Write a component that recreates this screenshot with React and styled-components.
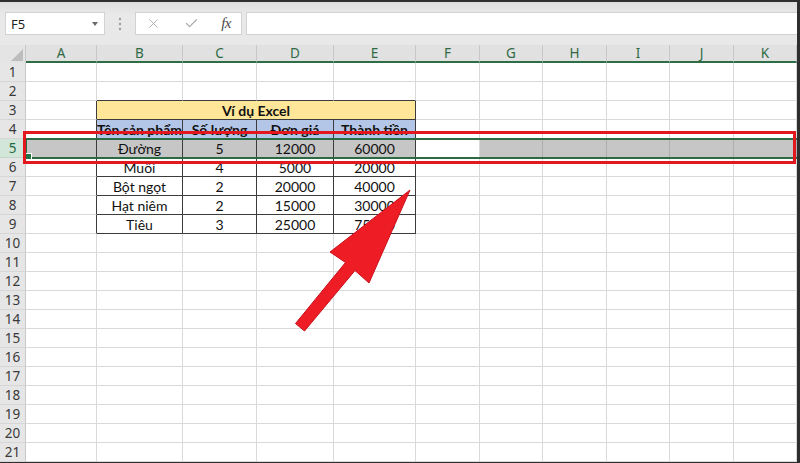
import React from "react";
import styled, { createGlobalStyle } from "styled-components";
import { X, Check } from "lucide-react";

const GlobalStyle = createGlobalStyle`
  html, body {
    margin: 0;
    padding: 0;
    background: #ffffff;
  }
  * {
    box-sizing: border-box;
  }
`;

const COLS = ["A", "B", "C", "D", "E", "F", "G", "H", "I", "J", "K"];
const WIDTHS = [71, 86, 74, 77, 82, 64, 63, 64, 63, 64, 63];

const TABLE = {
  4: ["Tên sản phẩm", "Số lượng", "Đơn giá", "Thành tiền"],
  5: ["Đường", "5", "12000", "60000"],
  6: ["Muối", "4", "5000", "20000"],
  7: ["Bột ngọt", "2", "20000", "40000"],
  8: ["Hạt niêm", "2", "15000", "30000"],
  9: ["Tiêu", "3", "25000", "75000"],
};

const SELECTED_ROW = 5;
const ACTIVE_COL = 5;

const Frame = styled.div`
  position: relative;
  width: 800px;
  height: 463px;
  overflow: hidden;
  border-top: 2px solid #2e2e2e;
  border-right: 3px solid #2e2e2e;
  border-bottom: 1px solid #2e2e2e;
  background: #ffffff;
  display: flex;
  flex-direction: column;
`;

const Toolbar = styled.div`
  height: 43px;
  flex: none;
  display: flex;
  align-items: flex-start;
  padding: 10px 0 0 5px;
  background: linear-gradient(#dedede, #e9e9e9 30%, #e8e8e8);
  font-family: "Noto Sans", "Open Sans", sans-serif;
`;

const NameBox = styled.div`
  width: 100px;
  height: 23px;
  background: #ffffff;
  border: 1px solid #d2d2d2;
  display: flex;
  align-items: center;
  justify-content: space-between;
  padding: 0 6px 0 5px;
  font-size: 13px;
  color: #222;
`;

const DropArrow = styled.span`
  width: 0;
  height: 0;
  border-left: 3.5px solid transparent;
  border-right: 3.5px solid transparent;
  border-top: 4px solid #6a6a6a;
`;

const Grip = styled.div`
  width: 30px;
  height: 23px;
  display: flex;
  align-items: center;
  justify-content: center;
`;

const FxGroup = styled.div`
  width: 107px;
  height: 23px;
  background: #ffffff;
  border: 1px solid #d2d2d2;
  display: flex;
  align-items: center;
  justify-content: space-between;
  padding: 0 10px 0 10px;
  color: #a8a8a8;
`;

const FxLabel = styled.span`
  font-family: "Liberation Serif", "DejaVu Serif", serif;
  font-style: italic;
  font-size: 15px;
  color: #4a4a4a;
  letter-spacing: -0.5px;
`;

const FormulaInput = styled.div`
  flex: 1;
  height: 23px;
  margin-left: 4px;
  background: #ffffff;
  border: 1px solid #d2d2d2;
  border-right: none;
`;

const Sheet = styled.div`
  position: relative;
  flex: 1;
  display: grid;
  grid-template-columns: 26px ${WIDTHS.map((w) => `${w}px`).join(" ")};
  grid-template-rows: 18px repeat(21, 19px);
`;

const Corner = styled.div`
  background: #e4e4e4;
  border-right: 1px solid #c9c9c9;
  display: flex;
  align-items: flex-end;
  justify-content: flex-end;
  padding: 0 2px 2px 0;

  &::after {
    content: "";
    width: 0;
    height: 0;
    border-left: 12px solid transparent;
    border-bottom: 12px solid #bdbdbd;
  }
`;

const ColHead = styled.div`
  background: #e1e1e1;
  border-right: 1px solid #c8c8c8;
  border-bottom: 2px solid #2d6e46;
  display: flex;
  align-items: center;
  justify-content: center;
  font-family: "Noto Sans", "Open Sans", sans-serif;
  font-size: 13.5px;
  color: #2f6a45;
`;

const RowHead = styled.div`
  background: ${(p) => (p.$active ? "#d3e6da" : "#e6e6e6")};
  border-right: 1px solid #c9c9c9;
  border-bottom: 1px solid ${(p) => (p.$active ? "#c5d6cb" : "#d6d6d6")};
  display: flex;
  align-items: center;
  justify-content: center;
  font-family: "Noto Sans", "Open Sans", sans-serif;
  font-size: 13.5px;
  color: ${(p) => (p.$active ? "#1f6b3f" : "#3a3a3a")};
`;

const Cell = styled.div`
  grid-column: span ${(p) => p.$span || 1};
  background: ${(p) => p.$bg || "#ffffff"};
  border-right: 1px solid ${(p) => (p.$darkRight ? "#3c3c3c" : p.$sel ? "#aeaeae" : "#d9d9d9")};
  border-bottom: 1px solid ${(p) => (p.$darkBottom ? "#3c3c3c" : "#d9d9d9")};
  display: flex;
  align-items: center;
  justify-content: center;
  overflow: hidden;
  white-space: nowrap;
  font-family: Lato, "Open Sans", sans-serif;
  font-size: 14px;
  font-weight: ${(p) => (p.$bold ? 700 : 400)};
  color: #111;
  padding-top: 1px;
`;

const Selection = styled.div`
  position: absolute;
  left: 26px;
  right: 0;
  top: ${18 + 19 * (SELECTED_ROW - 1) - 1}px;
  height: 21px;
  border-top: 2px solid #2a6b44;
  border-bottom: 2px solid #2a6b44;
  border-left: 1px solid #2a6b44;
  pointer-events: none;

  &::after {
    content: "";
    position: absolute;
    left: -2px;
    bottom: -3px;
    width: 5px;
    height: 5px;
    background: #217346;
    border: 1px solid #ffffff;
  }
`;

const Highlight = styled.div`
  position: absolute;
  left: 23px;
  top: 129px;
  width: 773px;
  height: 33px;
  border: 3px solid #e3171e;
  pointer-events: none;
`;

const ArrowLayer = styled.svg`
  position: absolute;
  left: 0;
  top: -2px;
  pointer-events: none;
`;

function GripIcon() {
  return (
    <svg width="4" height="14" viewBox="0 0 4 14">
      <circle cx="2" cy="2" r="1.2" fill="#9c9c9c" />
      <circle cx="2" cy="7" r="1.2" fill="#9c9c9c" />
      <circle cx="2" cy="12" r="1.2" fill="#9c9c9c" />
    </svg>
  );
}

function tableCell(r, c) {
  const inTable = c >= 1 && c <= 4 && r >= 3 && r <= 9;
  const darkRight = r >= 3 && r <= 9 && c >= 0 && c <= 4;
  const darkBottom = c >= 1 && c <= 4 && r >= 2 && r <= 9;
  const sel = r === SELECTED_ROW && c !== ACTIVE_COL;
  let bg = sel ? "#c6c6c6" : "#ffffff";
  let text = null;
  let bold = false;
  if (inTable && TABLE[r]) {
    text = TABLE[r][c - 1];
    if (r === 4) {
      bg = "#b4c6e7";
      bold = true;
    }
  }
  return { bg, text, bold, darkRight, darkBottom, sel };
}

function Row({ r }) {
  const cells = [];
  for (let c = 0; c < COLS.length; c++) {
    if (r === 3 && c >= 1 && c <= 4) {
      if (c === 1) {
        cells.push(
          <Cell key={c} $span={4} $bg="#ffe699" $bold $darkRight $darkBottom>
            Ví dụ Excel
          </Cell>
        );
      }
      continue;
    }
    const info = tableCell(r, c);
    cells.push(
      <Cell
        key={c}
        $bg={info.bg}
        $bold={info.bold}
        $darkRight={info.darkRight}
        $darkBottom={info.darkBottom}
        $sel={info.sel}
      >
        {info.text}
      </Cell>
    );
  }
  return (
    <>
      <RowHead $active={r === SELECTED_ROW}>{r}</RowHead>
      {cells}
    </>
  );
}

export default function App() {
  const rows = Array.from({ length: 21 }, (_, i) => i + 1);

  return (
    <>
      <GlobalStyle />
      <Frame>
        <Toolbar>
          <NameBox>
            F5
            <DropArrow />
          </NameBox>
          <Grip>
            <GripIcon />
          </Grip>
          <FxGroup>
            <X size={15} strokeWidth={1.4} />
            <Check size={15} strokeWidth={1.8} />
            <FxLabel>fx</FxLabel>
          </FxGroup>
          <FormulaInput />
        </Toolbar>

        <Sheet>
          <Corner />
          {COLS.map((l) => (
            <ColHead key={l}>{l}</ColHead>
          ))}
          {rows.map((r) => (
            <Row key={r} r={r} />
          ))}
          <Selection />
        </Sheet>

        <Highlight />
        <ArrowLayer width="800" height="463" viewBox="0 0 800 463">
          <polygon
            points="410,190 369,283 355,270.5 304.5,331 295.5,323.5 345.5,262.5 330,252"
            fill="#ee1c25"
            stroke="#c9111b"
            strokeWidth="1"
            strokeLinejoin="round"
          />
        </ArrowLayer>
      </Frame>
    </>
  );
}
